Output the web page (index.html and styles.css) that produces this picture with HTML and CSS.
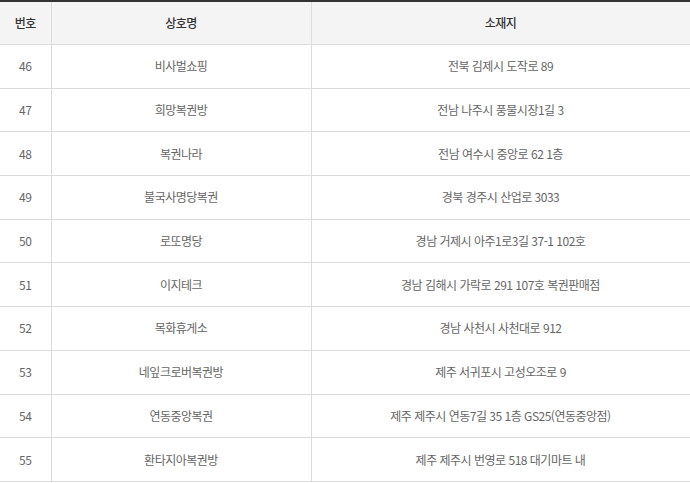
FILE: index.html
```html
<!DOCTYPE html>
<html lang="ko">
<head>
<meta charset="utf-8">
<link rel="stylesheet" href="styles.css">
</head>
<body>
<table class="list">
  <colgroup>
    <col class="c-no">
    <col class="c-name">
    <col class="c-addr">
  </colgroup>
  <thead>
    <tr><th>번호</th><th>상호명</th><th>소재지</th></tr>
  </thead>
  <tbody>
    <tr><td>46</td><td>비사벌쇼핑</td><td>전북 김제시 도작로 89</td></tr>
    <tr><td>47</td><td>희망복권방</td><td>전남 나주시 풍물시장1길 3</td></tr>
    <tr><td>48</td><td>복권나라</td><td>전남 여수시 중앙로 62 1층</td></tr>
    <tr><td>49</td><td>불국사명당복권</td><td>경북 경주시 산업로 3033</td></tr>
    <tr><td>50</td><td>로또명당</td><td>경남 거제시 아주1로3길 37-1 102호</td></tr>
    <tr><td>51</td><td>이지테크</td><td>경남 김해시 가락로 291 107호 복권판매점</td></tr>
    <tr><td>52</td><td>목화휴게소</td><td>경남 사천시 사천대로 912</td></tr>
    <tr><td>53</td><td>네잎크로버복권방</td><td>제주 서귀포시 고성오조로 9</td></tr>
    <tr><td>54</td><td>연동중앙복권</td><td>제주 제주시 연동7길 35 1층 GS25(연동중앙점)</td></tr>
    <tr><td>55</td><td>환타지아복권방</td><td>제주 제주시 번영로 518 대기마트 내</td></tr>
  </tbody>
</table>
</body>
</html>
```
FILE: styles.css
```css
html, body {
  margin: 0;
  padding: 0;
  background: #fff;
}
body {
  font-family: "Noto Sans CJK KR", "Noto Sans", sans-serif;
  font-size: 12px;
  letter-spacing: -0.5px;
}
.list {
  width: 690px;
  border-collapse: collapse;
  table-layout: fixed;
  border-top: 2px solid #333;
}
.c-no { width: 51px; }
.c-name { width: 260px; }
.c-addr { width: 379px; }
.list th,
.list td {
  padding: 0;
  text-align: center;
  line-height: 18px;
  border-bottom: 1px solid #dcdcdc;
  border-left: 1px solid #dcdcdc;
}
.list th:first-child,
.list td:first-child {
  border-left: none;
}
.list th:last-child,
.list td:last-child {
  border-right: 1px solid #dcdcdc;
}
.list th {
  height: 42px;
  background: #f4f4f4;
  color: #333;
  font-weight: 500;
}
.list td {
  height: 42.7px;
  color: #666;
  font-weight: 400;
}
```
